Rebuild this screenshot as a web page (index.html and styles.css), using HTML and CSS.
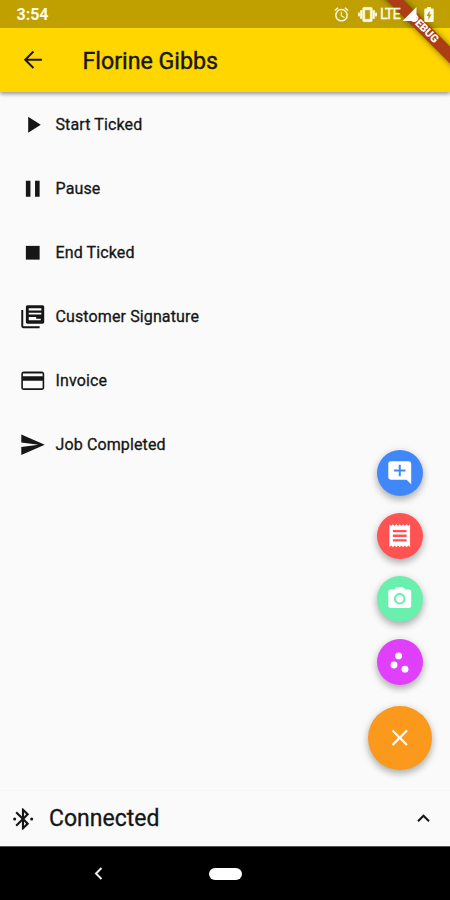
FILE: index.html
```html
<!DOCTYPE html>
<html lang="en">
<head>
<meta charset="utf-8">
<title>Florine Gibbs</title>
<link rel="stylesheet" href="styles.css">
</head>
<body>
<div class="screen">
  <header class="top">
    <div class="status">
      <span class="time">3:54</span>
      <svg class="alarm" viewBox="0 0 24 24"><path d="M22 5.700l-4.600-3.900-1.300 1.500 4.600 3.900L22 5.700zM7.900 3.400L6.600 1.900 2 5.700l1.300 1.500 4.600-3.800zM12.500 8H11v6l4.700 2.900.8-1.200-4-2.400V8zM12 4a9 9 0 1 0 0 18 9 9 0 0 0 0-18zm0 16a7 7 0 1 1 0-14 7 7 0 0 1 0 14z"/></svg>
      <svg class="vibrate" viewBox="0 0 24 24"><path d="M0 14h2v-4H0v4zm3 3h2V7H3v10zm19-7v4h2v-4h-2zm-3 7h2V7h-2v10zM16.500 3h-9C6.670 3 6 3.670 6 4.500v15c0 .83.67 1.500 1.500 1.500h9c.83 0 1.500-.67 1.500-1.500v-15c0-.83-.67-1.500-1.500-1.500zM15.500 18h-7V6h7v12z"/></svg>
      <span class="lte">LTE</span>
      <svg class="signal" viewBox="0 0 16 16"><path d="M0 16H16V0z"/></svg>
      <svg class="battery" viewBox="0 0 10 16"><path fill-rule="evenodd" d="M3 0h4v1.600h1.800Q10 1.600 10 2.800v12Q10 16 8.800 16H1.200Q0 16 0 14.800v-12Q0 1.600 1.200 1.600H3zM5.700 4L2.400 9.600h2v4L7.700 8h-2z"/></svg>
    </div>
    <div class="appbar">
      <svg class="icon" viewBox="0 0 24 24"><path d="M20 11.200H7.500l5.700-5.800L12 4.200 4.200 12l7.800 7.800 1.200-1.200-5.700-5.800H20z"/></svg>
      <h1>Florine Gibbs</h1>
    </div>
  </header>
  <div class="ribbon"><span>DEBUG</span></div>

  <main class="content">
    <ul class="menu">
      <li><svg class="icon" viewBox="0 0 24 24"><path d="M8 5v14l11-7z"/></svg><span>Start Ticked</span></li>
      <li><svg class="icon" viewBox="0 0 24 24"><path d="M6 19h4V5H6v14zm8-14v14h4V5h-4z"/></svg><span>Pause</span></li>
      <li><svg class="icon" viewBox="0 0 24 24"><path d="M6 6h12v12H6z"/></svg><span>End Ticked</span></li>
      <li><svg class="icon" viewBox="0 0 24 24"><path d="M3.700 6H2v14c0 1.100.9 2 2 2h14v-1.700H3.700V6z"/><path fill-rule="evenodd" d="M20.500 2h-13C6.700 2 6 2.700 6 3.500v13c0 .8.700 1.500 1.500 1.500h13c.8 0 1.500-.7 1.500-1.500v-13c0-.8-.7-1.500-1.500-1.500zM8.500 4.600h11v2h-11zM8.500 8.600h11v1.500h-11zM8.500 12.200h6.500v1.600h4v1.200H8.500z"/></svg><span>Customer Signature</span></li>
      <li><svg class="icon" viewBox="0 0 24 24"><path d="M20 4H4c-1.110 0-1.990.89-1.990 2L2 18c0 1.110.89 2 2 2h16c1.110 0 2-.89 2-2V6c0-1.110-.89-2-2-2zm.6 14.600H3.400V12h17.200v6.600zm0-10.600H3.400V5.600h17.200V8z"/></svg><span>Invoice</span></li>
      <li><svg class="icon" viewBox="0 0 24 24"><path d="M2.010 21L22.500 12 2.010 3 2 10l15 2-15 2z"/></svg><span>Job Completed</span></li>
    </ul>
    <div class="actions">
      <div class="fab blue"><svg class="icon" viewBox="0 0 24 24"><path d="M21.990 4c0-1.100-.89-2-1.990-2H4c-1.100 0-2 .9-2 2v12c0 1.100.9 2 2 2h14l4 4-.01-18zM17 10.900h-4.100V15h-1.800v-4.100H7V9.100h4.100V5h1.800v4.100H17z"/></svg></div>
      <div class="fab red"><svg class="icon" viewBox="0 0 24 24"><path d="M18 17H6v-2h12v2zm0-4H6v-2h12v2zm0-4H6V7h12v2zM3 22l1.500-1.500L6 22l1.500-1.500L9 22l1.500-1.500L12 22l1.500-1.500L15 22l1.500-1.500L18 22l1.500-1.500L21 22V2l-1.500 1.500L18 2l-1.500 1.500L15 2l-1.500 1.500L12 2l-1.500 1.500L9 2 7.500 3.500 6 2 4.500 3.500 3 2v20z"/></svg></div>
      <div class="fab green"><svg class="icon" viewBox="0 0 24 24"><circle cx="12" cy="12" r="3.200"/><path d="M9 2L7.170 4H4c-1.100 0-2 .9-2 2v12c0 1.100.9 2 2 2h16c1.100 0 2-.9 2-2V6c0-1.100-.9-2-2-2h-3.170L15 2H9zm3 15c-2.760 0-5-2.240-5-5s2.240-5 5-5 5 2.240 5 5-2.240 5-5 5z"/></svg></div>
      <div class="fab purple"><svg class="icon" viewBox="0 0 24 24"><circle cx="7" cy="14" r="3"/><circle cx="11" cy="6" r="3"/><circle cx="16.600" cy="17.600" r="3"/></svg></div>
      <div class="fab main"><svg class="icon" viewBox="0 0 24 24"><path d="M19 6.410L17.590 5 12 10.590 6.410 5 5 6.410 10.590 12 5 17.590 6.410 19 12 13.410 17.590 19 19 17.590 13.410 12z"/></svg></div>
    </div>
  </main>

  <div class="connection">
    <svg class="bt" viewBox="0 0 24 24"><circle cx="4.300" cy="12" r="1.400"/><circle cx="20" cy="12" r="1.400"/><path d="M17.710 7.710L12 2h-1v7.590L6.410 5 5 6.410 10.590 12 5 17.590 6.410 19 11 14.410V22h1l5.710-5.710-4.300-4.290 4.300-4.290zM13 5.830l1.880 1.880L13 9.590V5.830zm1.880 10.460L13 18.170v-3.760l1.880 1.880z"/></svg>
    <span>Connected</span>
    <svg class="chevron" viewBox="0 0 24 24"><path d="M12 8l-6 6 1.410 1.410L12 10.830l4.590 4.580L18 14z"/></svg>
  </div>
  <nav class="navbar">
    <svg class="back" viewBox="0 0 9 13"><path d="M7.500 1L2 6.500 7.500 12"/></svg>
    <div class="pill"></div>
  </nav>
</div>
</body>
</html>
```
FILE: styles.css
```css
* { box-sizing: border-box; margin: 0; padding: 0; }
body { width: 450px; height: 900px; overflow: hidden; font-family: Roboto, sans-serif; color: #161616; }
svg { display: block; fill: currentColor; flex: none; }
.screen { position: relative; display: flex; flex-direction: column; width: 450px; height: 900px; overflow: hidden; background: #fafafa; }
.top { height: 92px; flex: none; background: #ffd600; box-shadow: 0 2px 4px rgba(0,0,0,.32), 0 1px 5px rgba(0,0,0,.14); }
.status { display: flex; align-items: center; height: 28px; padding-left: 16.500px; background: #bfa000; color: #fffbe8; }
.status svg, .lte { position: relative; z-index: 2; }
.time { width: 316.500px; font-size: 16px; font-weight: 700; line-height: 28px; padding-top: 2px; }
.alarm { width: 17px; height: 17px; }
.vibrate { width: 19px; height: 19px; margin-left: 8px; stroke: currentColor; stroke-width: .8px; }
.lte { flex: none; margin-left: 3px; width: 22px; font-size: 14.500px; letter-spacing: -1px; padding-top: 1px; -webkit-text-stroke: .3px currentColor; }
.status .signal { width: 15px; height: 14px; color: #fff; }
.battery { width: 10px; height: 15px; margin-left: 7px; }
.appbar { display: flex; align-items: center; height: 64px; padding-left: 19px; }
.icon { width: 27.500px; height: 27.500px; }
.appbar h1 { margin-left: 36px; font-size: 23.200px; font-weight: 400; line-height: 30px; padding-top: 2px; -webkit-text-stroke: .4px currentColor; }
.ribbon { position: absolute; z-index: 1; left: 364px; top: 22.500px; width: 120px; height: 12px; display: flex; align-items: center; justify-content: center; background: #ac3d15; box-shadow: 0 0 6px rgba(0,0,0,.5); transform: rotate(45deg); color: #fff; }
.ribbon span { font-size: 11px; font-weight: 900; line-height: 12px; }
.content { position: relative; flex: 1; }
.menu { list-style: none; padding-top: .4px; }
.menu li { display: flex; align-items: center; height: 64.100px; padding-left: 19px; }
.menu span { margin-left: 9px; padding-top: 1px; font-size: 16px; font-weight: 400; letter-spacing: .12px; line-height: 22px; -webkit-text-stroke: .3px currentColor; }
.actions { position: absolute; right: 18px; bottom: 20px; display: flex; flex-direction: column; align-items: center; gap: 17.200px; }
.fab { display: flex; align-items: center; justify-content: center; width: 46px; height: 46px; border-radius: 50%; color: #fff; box-shadow: 0 4px 7px rgba(0,0,0,.25), 0 1px 10px rgba(0,0,0,.1); }
.blue { background: #4088fa; }
.red { background: #ff5252; }
.green { background: #69f0ae; }
.purple { background: #e040fb; }
.main { width: 64px; height: 64px; margin-top: 3.500px; background: #fb991d; }
.connection { display: flex; align-items: center; height: 56px; flex: none; padding: 0 14.500px 0 10px; border-top: 1px solid #f5f5f5; }
.bt { width: 26px; height: 26px; }
.connection span { flex: 1; margin-left: 13px; padding-top: 1px; font-size: 23px; line-height: 32px; -webkit-text-stroke: .3px currentColor; }
.chevron { width: 25px; height: 25px; }
.navbar { display: flex; align-items: center; height: 54px; flex: none; padding-left: 94px; background: #000; border-top: 1px solid #555; }
.back { width: 9px; height: 13px; fill: none; stroke: #eee; stroke-width: 2; }
.pill { width: 33px; height: 12px; margin-left: 106px; border-radius: 6px; background: #fff; }
```
